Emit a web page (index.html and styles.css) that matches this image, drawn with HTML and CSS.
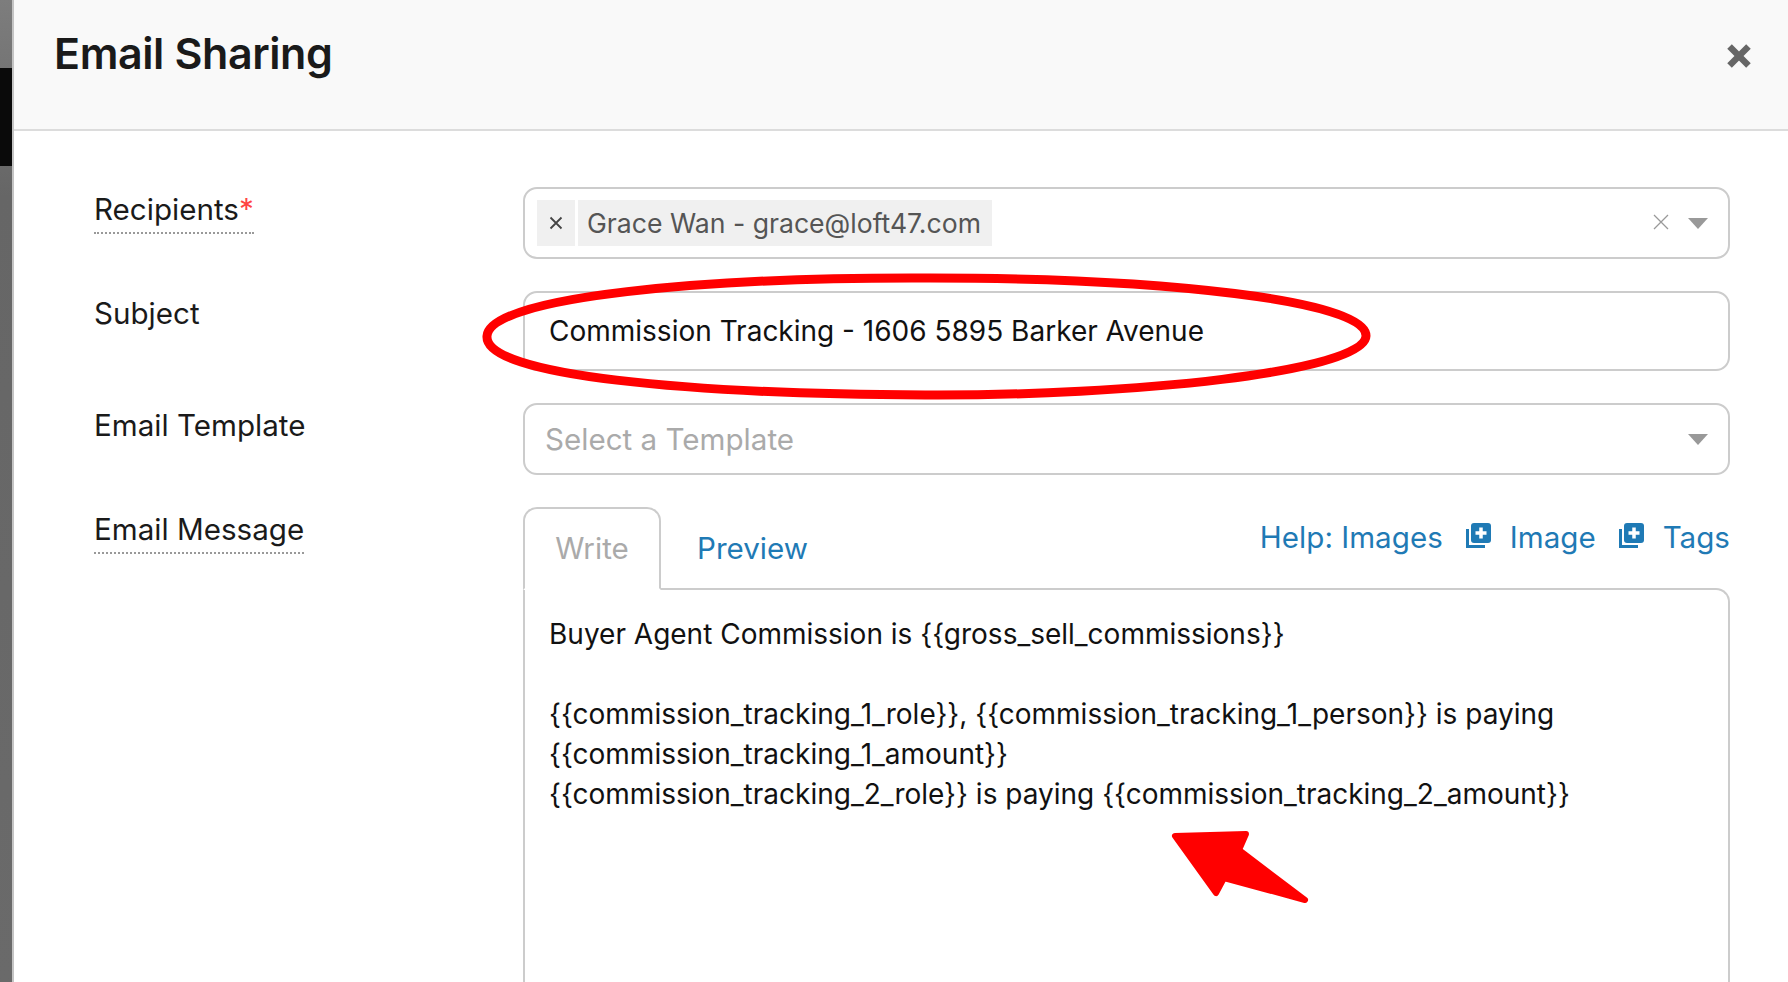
FILE: index.html
```html
<!DOCTYPE html>
<html lang="en">
<head>
<meta charset="utf-8">
<title>Email Sharing</title>
<link rel="stylesheet" href="styles.css">
</head>
<body>
<div class="backdrop"><div class="backdrop-black"></div></div>
<main class="modal">
  <header class="modal-header">
    <h1 class="modal-title">Email Sharing</h1>
    <svg class="close" viewBox="0 0 22 22" aria-label="Close"><path d="M3 3L19 19M19 3L3 19"/></svg>
  </header>
  <section class="modal-body">
    <div class="label"><span class="hint">Recipients<span class="req">*</span></span></div>
    <div class="field field-select">
      <span class="chip chip-x"><svg viewBox="0 0 14 14"><path d="M1.500 1.500L12.500 12.500M12.500 1.500L1.500 12.500"/></svg></span>
      <span class="chip chip-name">Grace Wan - grace@loft47.com</span>
      <span class="spacer"></span>
      <svg class="clear" viewBox="0 0 16 16"><path d="M1 1L15 15M15 1L1 15"/></svg>
      <span class="caret"></span>
    </div>

    <div class="label">Subject</div>
    <div class="field field-input">Commission Tracking - 1606 5895 Barker Avenue</div>

    <div class="label">Email Template</div>
    <div class="field field-select">
      <span class="placeholder">Select a Template</span>
      <span class="spacer"></span>
      <span class="caret"></span>
    </div>

    <div class="label"><span class="hint">Email Message</span></div>
    <div class="message">
      <div class="tabs">
        <span class="tab tab-active">Write</span>
        <span class="tab">Preview</span>
        <nav class="tools">
          <a class="tool">Help: Images</a>
          <svg class="plus" viewBox="0 0 25 25"><path class="plus-back" d="M1.500 6V23.500H19"/><rect x="5" y="0" width="20" height="20" rx="3"/><path class="plus-cross" d="M15 4.500V15.500M9.500 10H20.500"/></svg>
          <a class="tool">Image</a>
          <svg class="plus" viewBox="0 0 25 25"><path class="plus-back" d="M1.500 6V23.500H19"/><rect x="5" y="0" width="20" height="20" rx="3"/><path class="plus-cross" d="M15 4.500V15.500M9.500 10H20.500"/></svg>
          <a class="tool">Tags</a>
        </nav>
      </div>
      <div class="editor">
        <p>Buyer Agent Commission is {{gross_sell_commissions}}</p>
        <p class="gap">{{commission_tracking_1_role}}, {{commission_tracking_1_person}} is paying {{commission_tracking_1_amount}}</p>
        <p>{{commission_tracking_2_role}} is paying {{commission_tracking_2_amount}}</p>
      </div>
    </div>
  </section>
</main>
<svg class="annotations" viewBox="0 0 1788 982">
  <path class="ring" d="M930 278C1160 278 1367 300 1366 336C1365 372 1130 396 925 395C690 394 484 376 487 336C490 296 710 277 930 278Z"/>
  <path class="pointer" d="M1175 836L1246 834L1239 850L1305 900L1224 878L1216 893Z"/>
</svg>
</body>
</html>
```
FILE: styles.css
```css
* { box-sizing: border-box; }
html, body { margin: 0; height: 100%; }
body {
  display: flex;
  height: 982px;
  overflow: hidden;
  background: #fff;
  color: #1a1a1a;
  font-family: Inter, "Liberation Sans", sans-serif;
  font-size: 29.6px;
  line-height: 40px;
}
.backdrop {
  flex: 0 0 12px;
  padding-top: 68px;
  background: linear-gradient(#7d7d7d, #666 20%, #6a6a6a);
}
.backdrop-black { height: 98px; background: #0a0a0a; }
.modal {
  flex: 1;
  min-width: 0;
  border-left: 2px solid #c4c4c4;
  display: flex;
  flex-direction: column;
}
.modal-header {
  flex: 0 0 131px;
  display: flex;
  justify-content: space-between;
  background: #f9f9f9;
  border-bottom: 2px solid #dcdcdc;
  padding: 28px 36px 0 40px;
}
.modal-title {
  margin: 0;
  font-size: 43px;
  line-height: 50px;
  font-weight: 600;
  letter-spacing: -0.4px;
  color: #1a1a1a;
}
.close {
  width: 26px;
  height: 26px;
  margin-top: 15px;
  fill: none;
  stroke: #666;
  stroke-width: 5.500;
}
.modal-body {
  flex: 1;
  min-height: 0;
  display: grid;
  grid-template-columns: 429px 1207px;
  grid-template-rows: 72px 80px 72px 1fr;
  row-gap: 32px;
  padding: 56px 0 0 80px;
}
.label { padding-top: 2px; }
.hint {
  display: inline-block;
  border-bottom: 2px dotted #999;
  padding-bottom: 3px;
}
.req { color: #f44; }
.field {
  border: 2px solid #ccc;
  border-radius: 14px;
  display: flex;
  align-items: center;
}
.field-select { padding: 0 20px 0 12px; gap: 3px; }
.field-input { padding: 0 24px; font-size: 28px; color: #111; }
.spacer { flex: 1; }
.chip {
  height: 46px;
  display: flex;
  align-items: center;
  background: #f0f0f0;
  color: #555;
}
.chip-x { width: 38px; justify-content: center; }
.chip-x svg {
  width: 14px;
  height: 14px;
  fill: none;
  stroke: #444;
  stroke-width: 1.800;
}
.chip-name { padding: 0 11px 0 9px; font-size: 26.600px; }
.clear {
  width: 16px;
  height: 16px;
  margin-right: 16px;
  margin-top: -2px;
  fill: none;
  stroke: #999;
  stroke-width: 1.300;
}
.caret {
  width: 0;
  height: 0;
  border-left: 10px solid transparent;
  border-right: 10px solid transparent;
  border-top: 11px solid #999;
}
.placeholder { color: #aaa; padding-left: 8px; }
.message { display: flex; flex-direction: column; min-height: 0; }
.tabs { display: flex; height: 83px; align-items: stretch; margin-bottom: -2px; flex: none; }
.tab {
  padding: 21px 36px 0;
  color: #1f7ab5;
}
.tab-active {
  width: 138px;
  padding: 19px 0 0;
  text-align: center;
  color: #aaa;
  background: #fff;
  border: 2px solid #ccc;
  border-bottom: 2px solid #fff;
  border-radius: 14px 14px 0 0;
  position: relative;
  z-index: 1;
}
.tools {
  margin-left: auto;
  display: flex;
  align-items: flex-start;
  padding-top: 10px;
  color: #1f7ab5;
}
.tool { display: block; }
.plus { width: 25px; height: 25px; margin: 6px 19px 0 23px; fill: #1f7ab5; }
.plus-back { fill: none; stroke: #1f7ab5; stroke-width: 3; }
.plus-cross { fill: none; stroke: #fff; stroke-width: 3.500; }
.editor {
  flex: 1;
  min-height: 0;
  border: 2px solid #ccc;
  border-bottom: 0;
  border-radius: 0 14px 0 0;
  padding: 24px 24px 0;
  font-size: 28px;
  color: #111;
}
.editor p { margin: 0; }
.editor .gap { margin-top: 40px; max-width: 1030px; }
.annotations {
  position: absolute;
  left: 0;
  top: 0;
  width: 1788px;
  height: 982px;
  pointer-events: none;
}
.ring { fill: none; stroke: #f00; stroke-width: 9; }
.pointer { fill: #f00; stroke: #f00; stroke-width: 6; stroke-linejoin: round; }
```
